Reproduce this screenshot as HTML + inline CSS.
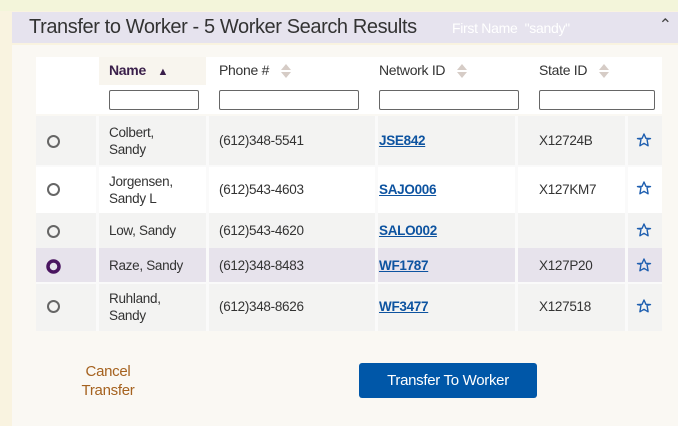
<!DOCTYPE html>
<html><head><meta charset="utf-8"><style>
*{box-sizing:border-box;margin:0;padding:0}
body{width:678px;height:426px;overflow:hidden;background:#f9f3e0;font-family:"Liberation Sans",sans-serif;position:relative;color:#333}
.top{position:absolute;left:0;top:0;width:678px;height:11px;background:#f3f5da}
.hdr{position:absolute;left:12px;top:12px;width:666px;height:31px;background:#e6e3ee}
.hdr .t{position:absolute;left:17px;top:4px;font-size:20px;color:#333;letter-spacing:-0.4px}
.hdr .s{position:absolute;left:440px;top:8px;font-size:14px;color:#fff;letter-spacing:-0.3px}
.hdr .c{position:absolute;right:6px;top:3px;font-size:16px;color:#444}
.bodyp{position:absolute;left:12px;top:45px;width:666px;height:381px;background:#faf8f3}
.a{position:absolute;font-size:13.5px;letter-spacing:-0.3px;line-height:17px}
.cell{position:absolute;background:#f3f3f2}
.lnk{color:#0d53a0;font-weight:bold;text-decoration:underline}
input{position:absolute;height:20px;border:1px solid #666;border-radius:2px;background:#fff}
.sort{display:inline-block;width:10px;vertical-align:middle;margin-left:8px}
</style></head><body>
<div class="top"></div>
<div class="hdr"><div class="t">Transfer to Worker - 5 Worker Search Results</div><div class="s">First Name &nbsp;"sandy"</div><div class="c">&#8963;</div></div>
<div class="bodyp"></div>
<div style="position:absolute;left:36px;top:57px;width:626px;height:57px;background:#fff"></div>
<div style="position:absolute;left:99px;top:57px;width:107px;height:28px;background:#f8f5ee"></div>
<div class="a" style="left:109px;top:62px;font-weight:bold;color:#3a1f4a;font-size:14px">Name <span style="font-size:11px;margin-left:8px">&#9650;</span></div>
<div class="a" style="left:219px;top:62px;font-size:14px">Phone # <svg class="sort" width="10" height="16" viewBox="0 0 10 16"><path d="M0 7L5 1L10 7Z M0 9L5 15L10 9Z" fill="#d6ccc6"/></svg></div>
<div class="a" style="left:379px;top:62px;font-size:14px">Network ID <svg class="sort" width="10" height="16" viewBox="0 0 10 16"><path d="M0 7L5 1L10 7Z M0 9L5 15L10 9Z" fill="#d6ccc6"/></svg></div>
<div class="a" style="left:539px;top:62px;font-size:14px">State ID <svg class="sort" width="10" height="16" viewBox="0 0 10 16"><path d="M0 7L5 1L10 7Z M0 9L5 15L10 9Z" fill="#d6ccc6"/></svg></div>
<input style="left:109px;top:90px;width:90px"><input style="left:219px;top:90px;width:140px"><input style="left:379px;top:90px;width:140px"><input style="left:539px;top:90px;width:116px">
<div style="position:absolute;left:36px;top:116px;width:626px;height:215px;background:#fafafa"></div>
<div class="cell" style="left:36px;top:116px;width:60px;height:49px"></div><div class="cell" style="left:99px;top:116px;width:107px;height:49px"></div><div class="cell" style="left:209px;top:116px;width:166px;height:49px"></div><div class="cell" style="left:378px;top:116px;width:137px;height:49px"></div><div class="cell" style="left:518px;top:116px;width:107px;height:49px"></div><div class="cell" style="left:628px;top:116px;width:34px;height:49px"></div>
<div class="cell" style="left:36px;top:167px;width:60px;height:46px;background:#fff"></div><div class="cell" style="left:99px;top:167px;width:107px;height:46px;background:#fff"></div><div class="cell" style="left:209px;top:167px;width:166px;height:46px;background:#fff"></div><div class="cell" style="left:378px;top:167px;width:137px;height:46px;background:#fff"></div><div class="cell" style="left:518px;top:167px;width:107px;height:46px;background:#fff"></div><div class="cell" style="left:628px;top:167px;width:34px;height:46px;background:#fff"></div>
<div class="cell" style="left:36px;top:213px;width:60px;height:35px"></div><div class="cell" style="left:99px;top:213px;width:107px;height:35px"></div><div class="cell" style="left:209px;top:213px;width:166px;height:35px"></div><div class="cell" style="left:378px;top:213px;width:137px;height:35px"></div><div class="cell" style="left:518px;top:213px;width:107px;height:35px"></div><div class="cell" style="left:628px;top:213px;width:34px;height:35px"></div>
<div class="cell" style="left:36px;top:248px;width:60px;height:34px;background:#e7e3ec"></div><div class="cell" style="left:99px;top:248px;width:107px;height:34px;background:#e7e3ec"></div><div class="cell" style="left:209px;top:248px;width:166px;height:34px;background:#e7e3ec"></div><div class="cell" style="left:378px;top:248px;width:137px;height:34px;background:#e7e3ec"></div><div class="cell" style="left:518px;top:248px;width:107px;height:34px;background:#e7e3ec"></div><div class="cell" style="left:628px;top:248px;width:34px;height:34px;background:#e7e3ec"></div>
<div class="cell" style="left:36px;top:284px;width:60px;height:47px"></div><div class="cell" style="left:99px;top:284px;width:107px;height:47px"></div><div class="cell" style="left:209px;top:284px;width:166px;height:47px"></div><div class="cell" style="left:378px;top:284px;width:137px;height:47px"></div><div class="cell" style="left:518px;top:284px;width:107px;height:47px"></div><div class="cell" style="left:628px;top:284px;width:34px;height:47px"></div>

<svg style="position:absolute;left:0;top:0" width="678" height="426">
<g fill="none" stroke="#666" stroke-width="2">
<circle cx="53.5" cy="141.5" r="5.5"/><circle cx="53.5" cy="189.5" r="5.5"/><circle cx="53.5" cy="231.5" r="5.5"/><circle cx="53.5" cy="306.5" r="5.5"/></g>
<circle cx="53.5" cy="266.5" r="5.5" fill="none" stroke="#4a1560" stroke-width="3.5"/>
<g fill="none" stroke="#1f5fb0" stroke-width="1.4" stroke-linejoin="round">
<path d="M0-6.5L1.9-2.2L6.5-1.9L3-1.2L4.1 5.3L0 2.8L-4.1 5.3L-3-1.2L-6.5-1.9L-1.9-2.2Z" transform="translate(644,140.5)"/>
<path d="M0-6.5L1.9-2.2L6.5-1.9L3-1.2L4.1 5.3L0 2.8L-4.1 5.3L-3-1.2L-6.5-1.9L-1.9-2.2Z" transform="translate(644,188.5)"/>
<path d="M0-6.5L1.9-2.2L6.5-1.9L3-1.2L4.1 5.3L0 2.8L-4.1 5.3L-3-1.2L-6.5-1.9L-1.9-2.2Z" transform="translate(644,230.5)"/>
<path d="M0-6.5L1.9-2.2L6.5-1.9L3-1.2L4.1 5.3L0 2.8L-4.1 5.3L-3-1.2L-6.5-1.9L-1.9-2.2Z" transform="translate(644,265.5)"/>
<path d="M0-6.5L1.9-2.2L6.5-1.9L3-1.2L4.1 5.3L0 2.8L-4.1 5.3L-3-1.2L-6.5-1.9L-1.9-2.2Z" transform="translate(644,306.5)"/>
</g></svg>

<div class="a" style="left:109px;top:124px">Colbert,<br>Sandy</div>
<div class="a" style="left:219px;top:132px">(612)348-5541</div>
<div class="a lnk" style="left:379px;top:132px">JSE842</div>
<div class="a" style="left:539px;top:132px">X12724B</div>

<div class="a" style="left:109px;top:173px">Jorgensen,<br>Sandy L</div>
<div class="a" style="left:219px;top:181px">(612)543-4603</div>
<div class="a lnk" style="left:379px;top:181px">SAJO006</div>
<div class="a" style="left:539px;top:181px">X127KM7</div>

<div class="a" style="left:109px;top:222px">Low, Sandy</div>
<div class="a" style="left:219px;top:222px">(612)543-4620</div>
<div class="a lnk" style="left:379px;top:222px">SALO002</div>

<div class="a" style="left:109px;top:257px">Raze, Sandy</div>
<div class="a" style="left:219px;top:257px">(612)348-8483</div>
<div class="a lnk" style="left:379px;top:257px">WF1787</div>
<div class="a" style="left:539px;top:257px">X127P20</div>

<div class="a" style="left:109px;top:290px">Ruhland,<br>Sandy</div>
<div class="a" style="left:219px;top:298px">(612)348-8626</div>
<div class="a lnk" style="left:379px;top:298px">WF3477</div>
<div class="a" style="left:539px;top:298px">X127518</div>

<div class="a" style="left:60px;top:362px;width:96px;text-align:center;color:#a5621f;font-size:15px;line-height:19px">Cancel<br>Transfer</div>
<div style="position:absolute;left:359px;top:363px;width:178px;height:35px;background:#0057a8;border-radius:3px;color:#fff;font-size:15px;text-align:center;line-height:35px;letter-spacing:-0.3px">Transfer To Worker</div>
</body></html>
